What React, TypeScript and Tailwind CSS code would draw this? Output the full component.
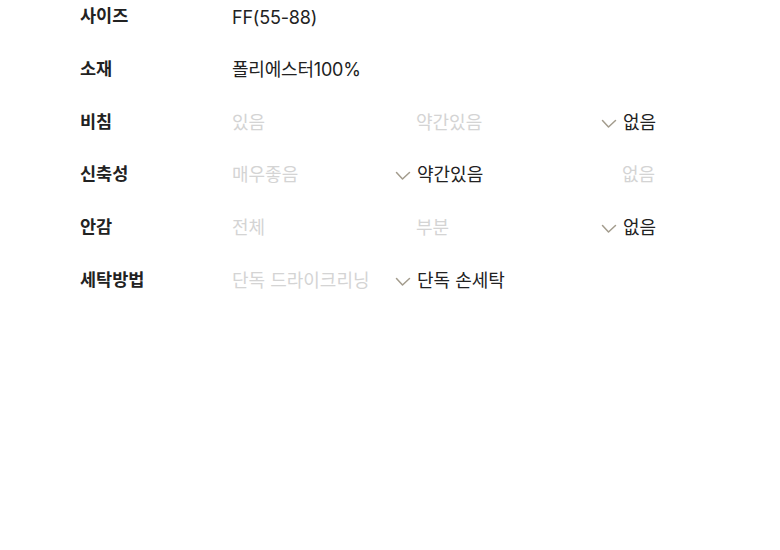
import React from "react";

type Opt = { t: string; on?: boolean };
type Row = { label: string; value?: string; opts?: Opt[] };

const rows: Row[] = [
  { label: "사이즈", value: "FF(55-88)" },
  { label: "소재", value: "폴리에스터100%" },
  { label: "비침", opts: [{ t: "있음" }, { t: "약간있음" }, { t: "없음", on: true }] },
  { label: "신축성", opts: [{ t: "매우좋음" }, { t: "약간있음", on: true }, { t: "없음" }] },
  { label: "안감", opts: [{ t: "전체" }, { t: "부분" }, { t: "없음", on: true }] },
  { label: "세탁방법", opts: [{ t: "단독 드라이크리닝" }, { t: "단독 손세탁", on: true }] },
];

function Check() {
  return (
    <svg className="absolute left-[-21px] top-[8px]" width="16" height="10" viewBox="0 0 16 10" fill="none">
      <path d="M1.5 1.5 L7.5 8 L14.5 1.5" stroke="#a39c8d" strokeWidth="1.5" strokeLinecap="round" strokeLinejoin="round" />
    </svg>
  );
}

export default function App() {
  return (
    <div
      className="w-[780px] h-[550px] bg-white overflow-hidden"
      style={{ fontFamily: 'Inter, "Noto Sans CJK KR", sans-serif' }}
    >
      <div className="flex flex-col pt-[4px] pl-[80px] gap-[28.8px]">
        {rows.map((r) => (
          <div key={r.label} className="flex h-[24px] items-center">
            <div className="w-[152px] text-[17.5px] font-bold text-[#222] leading-[24px]">{r.label}</div>
            {r.value ? (
              <div className="text-[18px] text-[#222] leading-[24px] mt-[3px] tracking-[-0.2px]">{r.value}</div>
            ) : (
              <div className="grid grid-cols-[184px_206px_1fr] flex-1 mt-[2px]">
                {r.opts!.map((o, i) => (
                  <div key={i} className="relative">
                    {o.on && <Check />}
                    <span
                      className={
                        "text-[18px] leading-[24px] " + (o.on ? "text-[#222] ml-[1px]" : "text-[#d4d4d4]")
                      }
                    >
                      {o.t}
                    </span>
                  </div>
                ))}
              </div>
            )}
          </div>
        ))}
      </div>
    </div>
  );
}
